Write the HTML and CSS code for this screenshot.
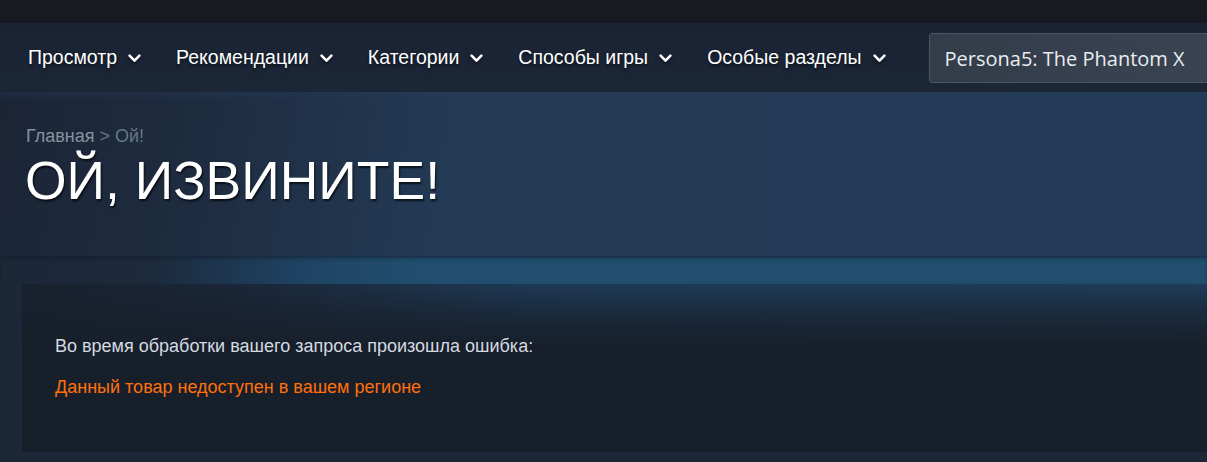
FILE: index.html
```html
<!DOCTYPE html>
<html lang="ru">
<head>
<meta charset="utf-8">
<title>Ой, извините!</title>
<link rel="stylesheet" href="styles.css">
</head>
<body>
<div class="topstrip"></div>
<nav class="storenav">
  <div class="nav-item"><span>Просмотр</span><svg class="chev" viewBox="0 0 13 9" width="13" height="9"><polyline points="1.6,1.6 6.5,6.6 11.4,1.6"/></svg></div>
  <div class="nav-item"><span>Рекомендации</span><svg class="chev" viewBox="0 0 13 9" width="13" height="9"><polyline points="1.6,1.6 6.5,6.6 11.4,1.6"/></svg></div>
  <div class="nav-item"><span>Категории</span><svg class="chev" viewBox="0 0 13 9" width="13" height="9"><polyline points="1.6,1.6 6.5,6.6 11.4,1.6"/></svg></div>
  <div class="nav-item"><span>Способы игры</span><svg class="chev" viewBox="0 0 13 9" width="13" height="9"><polyline points="1.6,1.6 6.5,6.6 11.4,1.6"/></svg></div>
  <div class="nav-item"><span>Особые разделы</span><svg class="chev" viewBox="0 0 13 9" width="13" height="9"><polyline points="1.6,1.6 6.5,6.6 11.4,1.6"/></svg></div>
  <div class="search"><span>Persona5: The Phantom X</span></div>
</nav>
<main class="page">
  <div class="head">
    <div class="crumbs"><a class="crumb-link">Главная</a> &gt; Ой!</div>
    <h1 class="title">ОЙ, ИЗВИНИТЕ!</h1>
  </div>
  <div class="band"></div>
  <div class="errorbox">
    <p class="err-intro">Во время обработки вашего запроса произошла ошибка:</p>
    <p class="err-msg">Данный товар недоступен в вашем регионе</p>
  </div>
</main>
</body>
</html>
```
FILE: styles.css
```css
* { box-sizing: border-box; }
html, body { margin: 0; padding: 0; }
body {
  width: 1207px;
  height: 462px;
  overflow: hidden;
  background: #1c2738;
  font-family: "Liberation Sans", Arial, sans-serif;
}
.topstrip {
  height: 23px;
  background: #171a21;
}
.storenav {
  height: 69px;
  background: linear-gradient(to bottom, #1a2333 0, #1b2637 100%);
  display: flex;
  align-items: center;
  padding-left: 28px;
  overflow: hidden;
  white-space: nowrap;
}
.nav-item {
  display: flex;
  align-items: center;
  color: #ffffff;
  font-size: 19.5px;
  margin-right: 35px;
  text-shadow: 0 2px 3px rgba(0,0,0,0.55);
}
.chev {
  margin-left: 11px;
  margin-top: 1px;
  flex: none;
  filter: drop-shadow(0 2px 2px rgba(0,0,0,0.5));
}
.chev polyline {
  fill: none;
  stroke: #ffffff;
  stroke-width: 2.6;
  stroke-linecap: round;
  stroke-linejoin: round;
}
.search {
  flex: none;
  margin-left: 8px;
  width: 320px;
  height: 50px;
  margin-top: 1px;
  border: 1px solid #4a5565;
  border-radius: 3px;
  background: linear-gradient(to right, #333c49, #3a4453);
  display: flex;
  align-items: center;
  padding-left: 15px;
  color: #e8ecef;
  font-family: "Open Sans", "Noto Sans", sans-serif;
  font-size: 20px;
}
.page {
  display: flex;
  flex-direction: column;
}
.head {
  height: 164px;
  padding: 34px 0 0 25px;
  background:
    linear-gradient(to bottom, rgba(40,60,90,0.35) 0, rgba(40,60,90,0) 8px),
    linear-gradient(100deg, #1b2536 0, #1e2c40 200px, #233a55 460px, #233b57 100%);
}
.crumbs {
  font-size: 18px;
  line-height: 20px;
  color: #66788a;
  padding-left: 1px;
}
.crumb-link { color: #8593a0; }
.title {
  margin: 8px 0 0 0;
  font-size: 53.5px;
  line-height: 54px;
  font-weight: normal;
  color: #ffffff;
  text-shadow: 1px 2px 2px rgba(0,0,0,0.7);
}
.band {
  height: 28px;
  border-top: 1px solid rgba(20,30,45,0.6);
  box-shadow: inset 0 2px 3px rgba(15,25,40,0.35);
  background: linear-gradient(to right, #1c2738 0, #1c2a3c 150px, #1f4465 310px, #214e6f 430px, #214e6e 100%);
}
.errorbox {
  margin-left: 22px;
  height: 168px;
  padding: 52px 0 0 33px;
  background:
    linear-gradient(to bottom, rgba(23,31,43,0) 0, rgba(23,31,43,0.6) 30px, #171f2b 60px),
    linear-gradient(to right, #18212e 0, #1a2637 200px, #1e3954 500px, #1f3c58 100%);
}
.err-intro {
  margin: 0;
  font-size: 18px;
  line-height: 21px;
  color: #d4dae0;
}
.err-msg {
  margin: 20px 0 0 0;
  font-size: 18px;
  line-height: 21px;
  color: #ff700a;
}
```
